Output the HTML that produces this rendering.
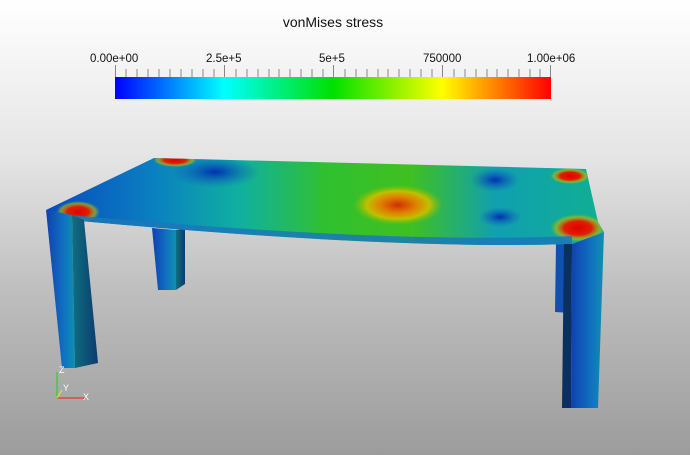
<!DOCTYPE html>
<html><head><style>
html,body{margin:0;padding:0}
body{width:690px;height:455px;overflow:hidden;background:linear-gradient(#ffffff 0%,#e4e4e4 35%,#bdbdbd 65%,#9c9c9c 100%);font-family:"Liberation Sans",sans-serif;position:relative}
.t{position:absolute;font-size:11.5px;color:#111;top:53px}
</style></head><body>
<div style="position:absolute;top:14px;left:0;width:666px;text-align:center;font-size:14px;color:#111">vonMises stress</div>
<div class="t" style="left:90px">0.00e+00</div>
<div class="t" style="left:206px">2.5e+5</div>
<div class="t" style="left:319px">5e+5</div>
<div class="t" style="left:423px">750000</div>
<div class="t" style="left:527px">1.00e+06</div>
<svg width="690" height="455" style="position:absolute;left:0;top:0">
<defs>
<linearGradient id="cb" x1="0" x2="1"><stop offset="0" stop-color="#0000ff"/><stop offset=".25" stop-color="#00ffff"/><stop offset=".5" stop-color="#00e000"/><stop offset=".75" stop-color="#ffff00"/><stop offset="1" stop-color="#ff0000"/></linearGradient>
<linearGradient id="top" x1="0" x2="1"><stop offset="0" stop-color="#0848c0"/><stop offset=".2" stop-color="#0a80c0"/><stop offset=".35" stop-color="#10b0a0"/><stop offset=".5" stop-color="#30c030"/><stop offset=".65" stop-color="#40c020"/><stop offset=".8" stop-color="#10a0b0"/><stop offset="1" stop-color="#10b090"/></linearGradient>
<radialGradient id="hot"><stop offset="0" stop-color="#d03000"/><stop offset=".4" stop-color="#e08000"/><stop offset=".7" stop-color="#c0c000"/><stop offset="1" stop-color="#80c000" stop-opacity="0"/></radialGradient>
<radialGradient id="red"><stop offset="0" stop-color="#e00000"/><stop offset=".5" stop-color="#e02000"/><stop offset=".8" stop-color="#c0c000" stop-opacity=".6"/><stop offset="1" stop-color="#80c000" stop-opacity="0"/></radialGradient>
<radialGradient id="blue"><stop offset="0" stop-color="#0030b0"/><stop offset="1" stop-color="#1060c0" stop-opacity="0"/></radialGradient>
<linearGradient id="leg" x1="0" x2="1"><stop offset="0" stop-color="#1040b0"/><stop offset=".6" stop-color="#1070c0"/><stop offset="1" stop-color="#1090b0"/></linearGradient>
<linearGradient id="legs" x1="0" x2="1"><stop offset="0" stop-color="#107080"/><stop offset="1" stop-color="#0a3a70"/></linearGradient>
<clipPath id="tc"><path d="M154,158 L586,169 L598,222 L604,232 L572,244 Q391,250 70,220 L46,210 Z"/></clipPath>
</defs>
<rect x="115" y="77" width="436" height="22" fill="url(#cb)"/>
<g stroke="#888" stroke-width="1">
<path d="M115.5,65v12M126,69v8M137,69v8M148,69v8M159,69v8M170,69v8M181,69v8M192,69v8M203,69v8M214,69v8M224.5,65v12M236,69v8M247,69v8M258,69v8M269,69v8M279,69v8M290,69v8M301,69v8M312,69v8M323,69v8M333.5,65v12M345,69v8M356,69v8M367,69v8M378,69v8M388,69v8M399,69v8M410,69v8M421,69v8M432,69v8M442.5,65v12M454,69v8M465,69v8M476,69v8M487,69v8M497,69v8M508,69v8M519,69v8M530,69v8M540,69v8M550.5,65v12"/>
</g>
<path d="M152,228 L176,230 L176,290 L158,290 Z" fill="url(#leg)"/>
<path d="M176,230 L185,229 L185,284 L176,290 Z" fill="url(#legs)"/>
<path d="M556,243 L572,243 L571,313 L555,312 Z" fill="#1050b0"/>
<g clip-path="url(#tc)">
<rect x="40" y="150" width="570" height="110" fill="url(#top)"/>
<ellipse cx="398" cy="205" rx="45" ry="20" fill="url(#hot)"/>
<ellipse cx="215" cy="172" rx="45" ry="16" fill="url(#blue)"/>
<ellipse cx="495" cy="180" rx="25" ry="12" fill="url(#blue)"/>
<ellipse cx="500" cy="217" rx="22" ry="10" fill="url(#blue)"/>
<ellipse cx="175" cy="160" rx="22" ry="7" fill="url(#red)"/>
<ellipse cx="570" cy="176" rx="20" ry="8" fill="url(#red)"/>
<ellipse cx="78" cy="212" rx="22" ry="11" fill="url(#red)"/>
<ellipse cx="578" cy="228" rx="28" ry="14" fill="url(#red)"/>
<path d="M70,215 Q391,244 572,236 L572,246 Q391,254 70,222 Z" fill="#1a78b8" opacity=".85"/>
</g>
<path d="M46,210 L72,215 L75,368 L62,368 Z" fill="url(#leg)"/>
<path d="M72,215 L84,220 L98,363 L75,368 Z" fill="url(#legs)"/>
<path d="M564,244 L572,244 L571,408 L562,408 Z" fill="#0a3060"/>
<path d="M572,244 L604,232 L598,408 L571,408 Z" fill="url(#leg)"/>
<g stroke-width="1.2" fill="none">
<path d="M57,398 V372" stroke="#3c3"/><path d="M57,398 H86" stroke="#e33"/><path d="M57,398 L62,390" stroke="#dd3"/>
</g>
<text x="59" y="373" font-size="9" font-family="Liberation Sans" fill="#fff">Z</text>
<text x="63" y="391" font-size="9" font-family="Liberation Sans" fill="#fff">Y</text>
<text x="83" y="400" font-size="9" font-family="Liberation Sans" fill="#fff">X</text>
</svg>
</body></html>
